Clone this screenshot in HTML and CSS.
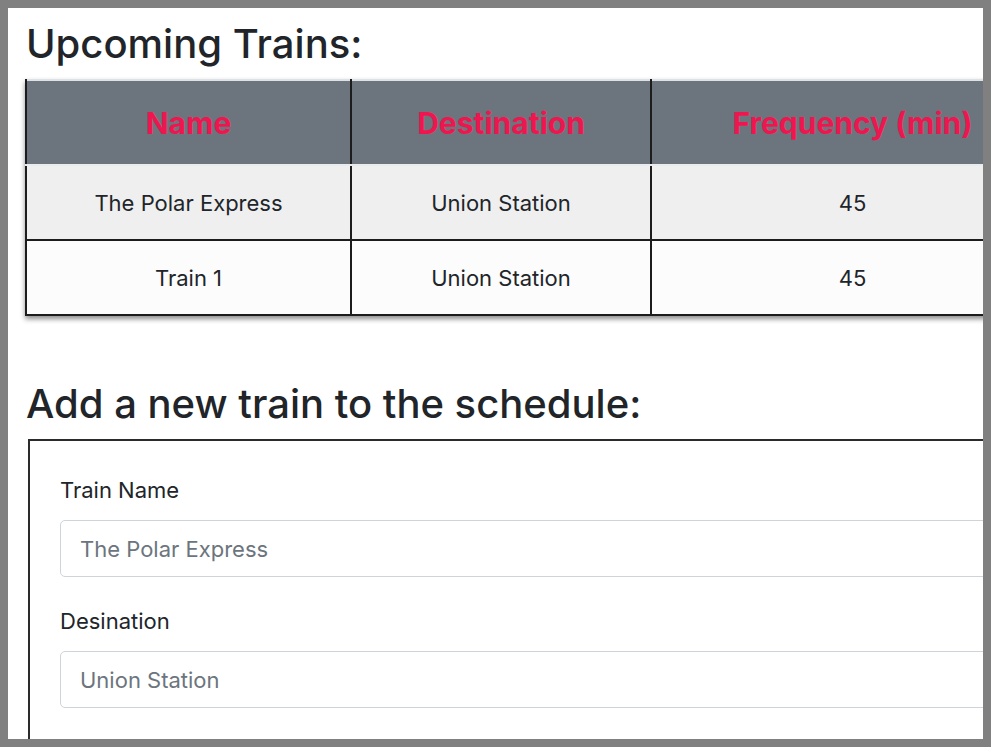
FILE: index.html
```html
<!DOCTYPE html>
<html lang="en">
<head>
<meta charset="utf-8">
<title>Train Scheduler</title>
<link rel="stylesheet" href="styles.css">
</head>
<body>
<div class="page">
  <h1 class="title">Upcoming Trains:</h1>
  <table class="trains">
    <colgroup>
      <col class="c-name">
      <col class="c-dest">
      <col class="c-freq">
    </colgroup>
    <thead>
      <tr>
        <th>Name</th>
        <th>Destination</th>
        <th>Frequency (min)</th>
      </tr>
    </thead>
    <tbody>
      <tr class="odd">
        <td>The Polar Express</td>
        <td>Union Station</td>
        <td>45</td>
      </tr>
      <tr class="even">
        <td>Train 1</td>
        <td>Union Station</td>
        <td>45</td>
      </tr>
    </tbody>
  </table>

  <h1 class="title title-add">Add a new train to the schedule:</h1>
  <form class="add-form">
    <div class="group">
      <label class="label" for="name">Train Name</label>
      <input class="control" id="name" type="text" placeholder="The Polar Express">
    </div>
    <div class="group">
      <label class="label" for="dest">Desination</label>
      <input class="control" id="dest" type="text" placeholder="Union Station">
    </div>
  </form>
</div>
</body>
</html>
```

FILE: styles.css
```css
html {
  background: #808080;
  overflow: hidden;
}
body {
  margin: 8px;
  font-family: Inter, "Liberation Sans", sans-serif;
  color: #212529;
}
.page {
  background: #ffffff;
  height: 731px;
  overflow: hidden;
  padding: 12px 0 0 18px;
  box-sizing: border-box;
}
.title {
  margin: 0 0 11px 0;
  font-size: 40px;
  line-height: 48px;
  font-weight: 500;
  white-space: nowrap;
}
.title-add {
  margin-top: 64px;
  margin-bottom: 11px;
}
.trains {
  margin-left: -1px;
  width: 1028px;
  table-layout: fixed;
  border-collapse: collapse;
  border-top: 2px solid #dee2e6;
  box-shadow: 0 3px 5px rgba(0, 0, 0, 0.45);
}
.c-name { width: 325px; }
.c-dest { width: 300px; }
.c-freq { width: 403px; }
.trains th {
  background: #6c757d;
  color: #ef1650;
  font-family: Inter, Roboto, sans-serif;
  font-weight: 700;
  font-size: 30px;
  height: 83px;
  padding: 0;
  border-left: 2px solid #1c1c1c;
  border-right: 2px solid #1c1c1c;
  border-bottom: 2px solid #e9ecef;
}
.trains td {
  text-align: center;
  font-size: 22px;
  height: 73px;
  padding: 0;
  border: 2px solid #1c1c1c;
}
.trains tr.odd td { background: #efefef; border-top: none; }
.trains tr.even td { background: #fcfcfc; }
.add-form {
  margin-left: 2px;
  width: 1100px;
  border: 2px solid #2b2b2b;
  padding: 33px 30px 0 30px;
  box-sizing: border-box;
  height: 400px;
}
.group {
  margin-bottom: 28px;
}
.label {
  display: block;
  font-size: 22px;
  line-height: 33px;
  margin-bottom: 13px;
}
.control {
  display: block;
  width: 100%;
  box-sizing: border-box;
  height: 57px;
  border: 1px solid #ced4da;
  border-radius: 5px;
  padding: 0 19px;
  font-family: Inter, "Liberation Sans", sans-serif;
  font-size: 22px;
  color: #495057;
  background: #fff;
}
.control::placeholder {
  color: #6c757d;
}
```
